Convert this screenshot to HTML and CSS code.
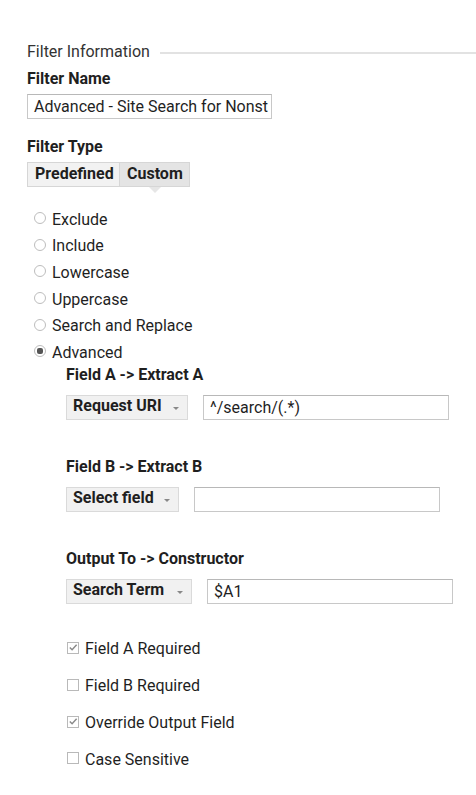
FILE: index.html
```html
<!DOCTYPE html>
<html>
<head>
<meta charset="utf-8">
<link rel="stylesheet" href="styles.css">
</head>
<body>
<div class="page">
  <div class="legend"><span class="legend-text">Filter Information</span><span class="legend-line"></span></div>

  <div class="label first">Filter Name</div>
  <div class="textbox name">Advanced - Site Search for Nonst</div>

  <div class="label type">Filter Type</div>
  <div class="tabs">
    <div class="tab">Predefined</div>
    <div class="tab selected">Custom<span class="notch"></span></div>
  </div>

  <div class="radios">
    <div class="radio-row"><span class="radio"></span>Exclude</div>
    <div class="radio-row"><span class="radio"></span>Include</div>
    <div class="radio-row"><span class="radio"></span>Lowercase</div>
    <div class="radio-row"><span class="radio"></span>Uppercase</div>
    <div class="radio-row"><span class="radio"></span>Search and Replace</div>
    <div class="radio-row"><span class="radio checked"></span>Advanced</div>
  </div>

  <div class="advanced">
    <div class="label">Field A -&gt; Extract A</div>
    <div class="field-row">
      <div class="select w-a">Request URI<span class="caret"></span></div>
      <div class="textbox value">^/search/(.*)</div>
    </div>

    <div class="label gap">Field B -&gt; Extract B</div>
    <div class="field-row">
      <div class="select w-b">Select field<span class="caret"></span></div>
      <div class="textbox value"></div>
    </div>

    <div class="label gap">Output To -&gt; Constructor</div>
    <div class="field-row">
      <div class="select w-c">Search Term<span class="caret"></span></div>
      <div class="textbox value">$A1</div>
    </div>

    <div class="checks">
      <div class="check-row"><span class="box checked"><svg viewBox="0 0 11 11" width="11" height="11"><path d="M2 5.5 L4.5 8 L9.5 2.5" fill="none" stroke="#8a8a8a" stroke-width="1.6"/></svg></span>Field A Required</div>
      <div class="check-row"><span class="box"></span>Field B Required</div>
      <div class="check-row"><span class="box checked"><svg viewBox="0 0 11 11" width="11" height="11"><path d="M2 5.5 L4.5 8 L9.5 2.5" fill="none" stroke="#8a8a8a" stroke-width="1.6"/></svg></span>Override Output Field</div>
      <div class="check-row"><span class="box"></span>Case Sensitive</div>
    </div>
  </div>
</div>
</body>
</html>
```

FILE: styles.css
```css
html, body {
  margin: 0;
  padding: 0;
  background: #fff;
}
body {
  font-family: Roboto, "Liberation Sans", Arial, sans-serif;
  font-size: 16px;
  color: #1f1f1f;
}
.page {
  padding: 42px 0 0 27px;
}
.legend {
  display: flex;
  align-items: center;
  height: 18px;
}
.legend-text {
  color: #333;
}
.legend-line {
  flex: 1;
  height: 0;
  border-top: 2px solid #e2e2e2;
  margin-left: 10px;
  margin-top: 3px;
}
.label {
  font-weight: bold;
  line-height: 18px;
  height: 18px;
  color: #1f1f1f;
}
.label.first {
  margin-top: 10px;
}
.label.type {
  margin-top: 19px;
}
.textbox {
  box-sizing: border-box;
  height: 25px;
  border: 1px solid #c8c8c8;
  border-top-color: #b8b8b8;
  background: #fff;
  line-height: 23px;
  padding-left: 6px;
  white-space: nowrap;
  overflow: hidden;
}
.textbox.name {
  margin-top: 6px;
  width: 245px;
}
.tabs {
  display: flex;
  margin-top: 6px;
  height: 25px;
}
.tab {
  position: relative;
  box-sizing: border-box;
  height: 25px;
  line-height: 22px;
  font-weight: bold;
  border: 1px solid #d6d6d6;
  background: #f2f2f2;
  padding: 0 7px;
  color: #1f1f1f;
}
.tab.selected {
  background: #e4e4e4;
  border-left: none;
  width: 70px;
}
.tab:first-child {
  width: 93px;
}
.notch {
  position: absolute;
  left: 29px;
  top: 24px;
  width: 0;
  height: 0;
  border-left: 6px solid transparent;
  border-right: 6px solid transparent;
  border-top: 6px solid #e6e6e6;
}
.radios {
  margin-top: 19px;
}
.radio-row {
  display: flex;
  align-items: center;
  height: 26.6px;
  padding-left: 7px;
}
.radio {
  box-sizing: border-box;
  width: 12px;
  height: 12px;
  border: 1.5px solid #bdbdbd;
  border-radius: 50%;
  margin-right: 6px;
  position: relative;
  top: -1px;
}
.radio.checked::after {
  content: "";
  position: absolute;
  left: 1.5px;
  top: 1.5px;
  width: 6px;
  height: 6px;
  border-radius: 2px;
  background: #555;
}
.advanced {
  padding-left: 39px;
}
.label.gap {
  margin-top: 38px;
}
.field-row {
  display: flex;
  margin-top: 11px;
  height: 25px;
}
.select {
  position: relative;
  box-sizing: border-box;
  height: 25px;
  line-height: 19px;
  border: 1px solid #dadada;
  background: #f1f1f1;
  font-weight: bold;
  padding-left: 6px;
  color: #1f1f1f;
  margin-right: 15px;
}
.select.w-a { width: 122px; }
.select.w-b { width: 113px; }
.select.w-c { width: 126px; }
.caret {
  position: absolute;
  right: 8px;
  top: 11px;
  width: 0;
  height: 0;
  border-left: 3px solid transparent;
  border-right: 3px solid transparent;
  border-top: 3px solid #888;
}
.field-row .textbox.value {
  width: 246px;
}
.checks {
  margin-top: 27px;
}
.check-row {
  display: flex;
  align-items: center;
  height: 36.8px;
  padding-left: 1px;
}
.box {
  box-sizing: border-box;
  width: 12px;
  height: 12px;
  border: 1px solid #b9b9b9;
  margin-right: 6px;
  display: flex;
  align-items: center;
  justify-content: center;
  position: relative;
  top: -1px;
}
.box svg {
  display: block;
}
```
